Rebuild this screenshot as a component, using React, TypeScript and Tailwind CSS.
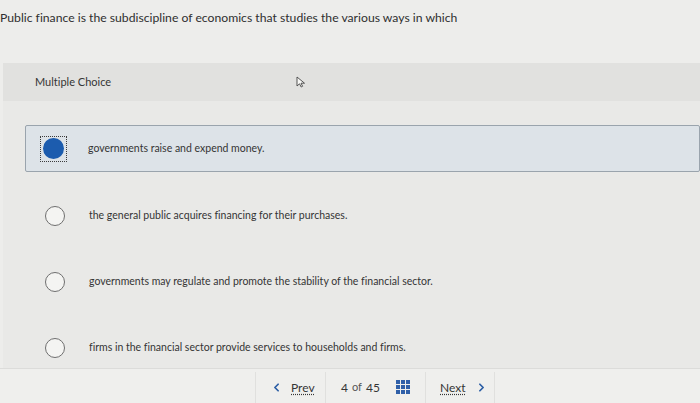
import { ChevronLeft, ChevronRight } from "lucide-react";

const font = { fontFamily: "Lato, 'Open Sans', sans-serif" };

function Radio() {
  return <span className="block w-[20px] h-[20px] rounded-full border-[1.5px] border-[#6f6f6f] bg-[#f4f4f2]" />;
}

function GridIcon() {
  return (
    <svg width="15" height="15" viewBox="0 0 15 15">
      {[0, 5, 10].map((y) =>
        [0, 5, 10].map((x) => <rect key={`${x}-${y}`} x={x} y={y} width="4" height="4" fill="#2f5fa8" />)
      )}
    </svg>
  );
}

function Cursor() {
  return (
    <svg width="10" height="12" viewBox="0 0 10 12">
      <path d="M1 1 L1 10 L3.5 7.8 L5.2 11 L6.6 10.3 L5 7.2 L8.5 7.2 Z" fill="#f7f7f5" stroke="#444" strokeWidth="0.9" strokeLinejoin="round" />
    </svg>
  );
}

export default function App() {
  const options = [
    { text: "the general public acquires financing for their purchases.", mt: "mt-[34px]" },
    { text: "governments may regulate and promote the stability of the financial sector.", mt: "mt-[46px]" },
    { text: "firms in the financial sector provide services to households and firms.", mt: "mt-[46px]" },
  ];

  return (
    <div
      className="w-[700px] h-[403px] bg-[#ededeb] overflow-hidden flex flex-col text-[#353535] [font-variant-ligatures:none]"
      style={font}
    >
      {/* question */}
      <div className="h-[63px] pt-[9px] text-[12.2px] leading-[18px] text-[#2f2f2f] whitespace-nowrap">
        Public finance is the subdiscipline of economics that studies the various ways in which
      </div>

      {/* answer panel */}
      <div className="ml-[3px] h-[305px] bg-[#e9e9e7] flex flex-col">
        <div className="h-[38px] bg-[#e1e1df] flex items-center pl-[32px] text-[11px] relative">
          Multiple Choice
          <span className="absolute left-[293px] top-[13px]">
            <Cursor />
          </span>
        </div>

        <div className="mt-[24px] ml-[22px] h-[47px] border border-[#9aa4ad] bg-[#dde3e8] rounded-[2px] flex items-center">
          <span className="ml-[14px] w-[27px] h-[26px] border-[1.5px] border-dotted border-[#3c3c3c] flex items-center justify-center">
            <span className="block w-[21px] h-[21px] rounded-full bg-[#1c5cae]" />
          </span>
          <span className="ml-[21px] text-[10.5px]">governments raise and expend money.</span>
        </div>

        {options.map((o) => (
          <div key={o.text} className={`${o.mt} h-[20px] flex items-center`}>
            <span className="ml-[42px]">
              <Radio />
            </span>
            <span className="ml-[24px] text-[10.5px]">{o.text}</span>
          </div>
        ))}
      </div>

      {/* footer nav */}
      <div className="flex-1 border-t border-[#dcdcda] bg-[#efefed] flex items-stretch pl-[255px] pt-[3px]">
        <div className="w-[70px] border-l border-[#e0e0de] flex items-center pl-[14px] gap-[8px] text-[12px]">
          <ChevronLeft size={13} strokeWidth={3.2} className="text-[#2c5ea5]" />
          <span className="underline decoration-dotted underline-offset-2">Prev</span>
        </div>
        <div className="w-[100px] border-l border-[#e0e0de] flex items-center pl-[15px] text-[12px]">
          <span>4</span>
          <span className="ml-[4px] text-[11px] text-[#555]">of</span>
          <span className="ml-[4px]">45</span>
          <span className="ml-[16px]">
            <GridIcon />
          </span>
        </div>
        <div className="w-[70px] border-l border-r border-[#e0e0de] flex items-center pl-[14px] gap-[9px] text-[12px]">
          <span className="underline decoration-dotted underline-offset-2">Next</span>
          <ChevronRight size={13} strokeWidth={3.2} className="text-[#2c5ea5]" />
        </div>
      </div>
    </div>
  );
}
